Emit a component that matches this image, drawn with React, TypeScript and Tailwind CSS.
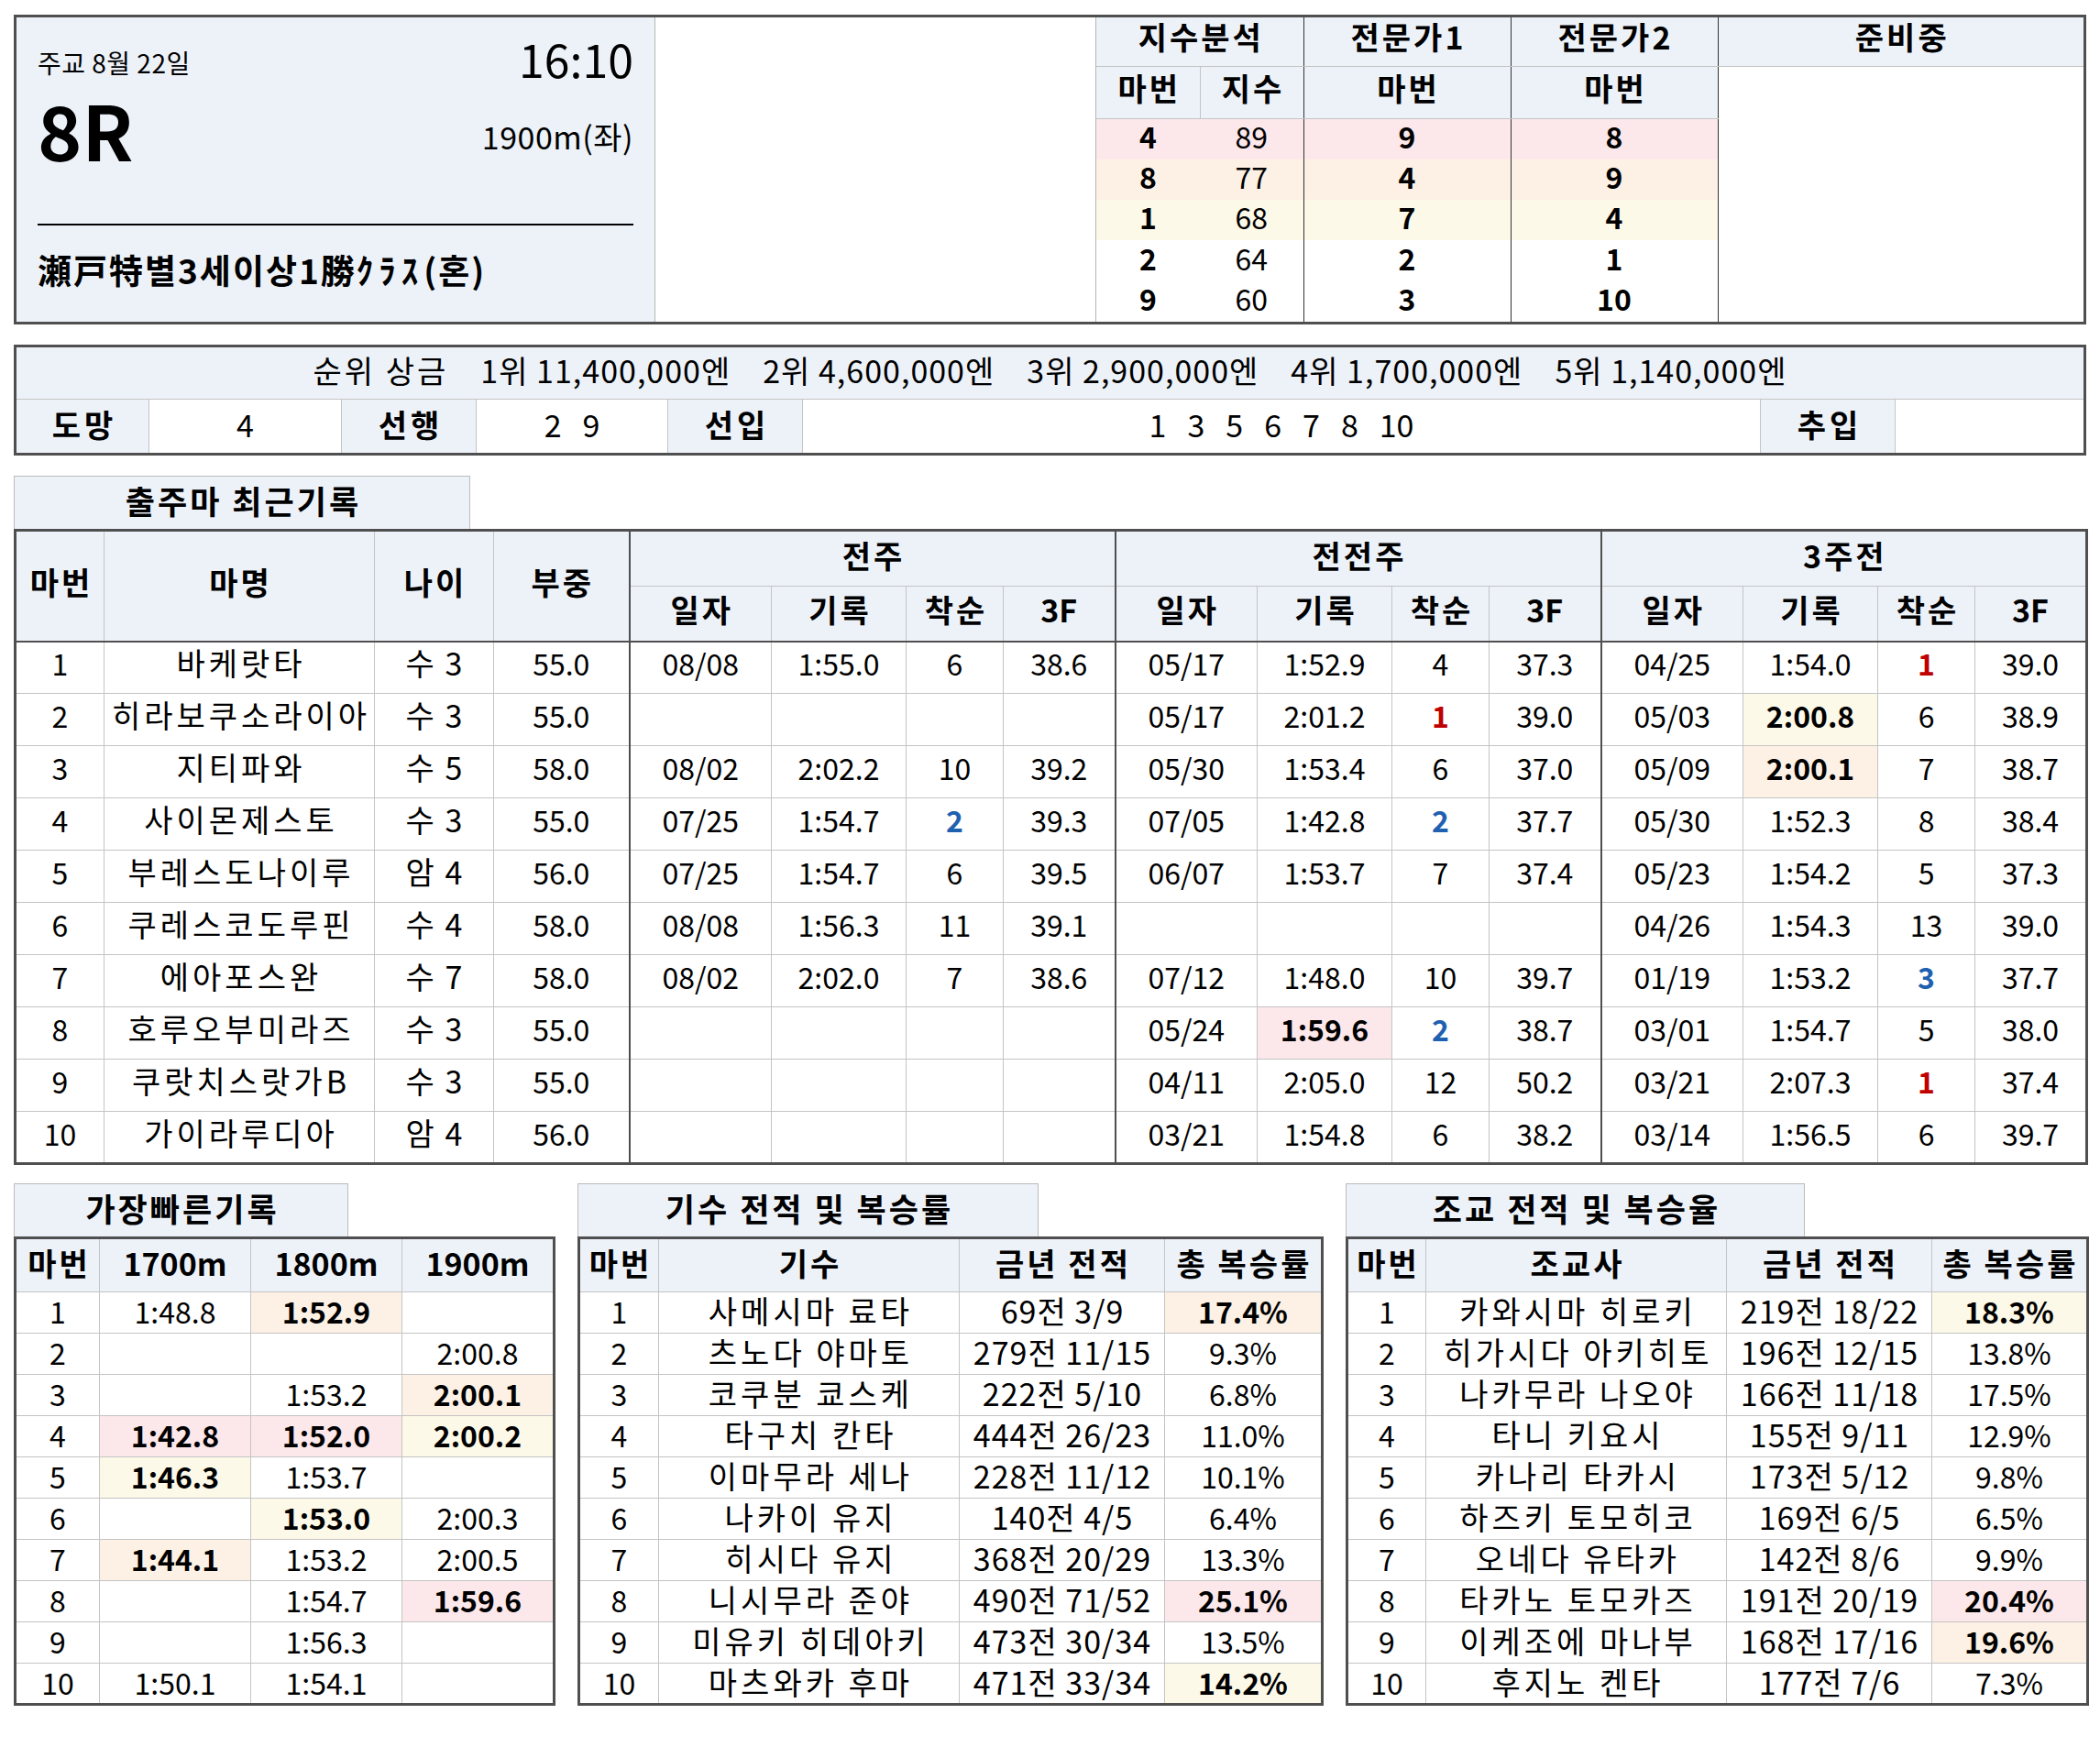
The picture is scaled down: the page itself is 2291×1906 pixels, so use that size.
import React from "react"

type Hl = "pink" | "orange" | "yellow"
type C = string | [string, Hl]

const FONT = "font-['Noto_Sans_CJK_KR','Noto_Sans',sans-serif]"
const HEAD = "bg-[#edf2f9]"
const BG: Record<Hl, string> = {
  pink: "bg-[#fce8ea]",
  orange: "bg-[#fdf1e5]",
  yellow: "bg-[#fdf9e8]",
}
const CELL = "border border-[#c4c4c4] text-center align-middle px-0 pt-0 whitespace-nowrap"
const SEP = "border-l-2 border-l-[#4f4f4f]"
const HBOT = "border-b-2 border-b-[#4f4f4f]"
// hangul headers get extra spacing to match the wide korean face of the original
const HTH = "text-[34px] font-bold tracking-[3px] pl-[3px]"
const NTH = "text-[34px] font-bold"
const hasHangul = (s: string) => /[\uac00-\ud7a3]/.test(s)

type Race = { d: string; t: string; r: string; f: string; hl?: Hl; rc?: "red" | "blue" } | null

const HORSES: { no: string; name: string; age: string; w: string; races: Race[] }[] = [
  {
    no: "1", name: "바케랏타", age: "수 3", w: "55.0",
    races: [
      { d: "08/08", t: "1:55.0", r: "6", f: "38.6" },
      { d: "05/17", t: "1:52.9", r: "4", f: "37.3" },
      { d: "04/25", t: "1:54.0", r: "1", f: "39.0", rc: "red" },
    ],
  },
  {
    no: "2", name: "히라보쿠소라이아", age: "수 3", w: "55.0",
    races: [
      null,
      { d: "05/17", t: "2:01.2", r: "1", f: "39.0", rc: "red" },
      { d: "05/03", t: "2:00.8", r: "6", f: "38.9", hl: "yellow" },
    ],
  },
  {
    no: "3", name: "지티파와", age: "수 5", w: "58.0",
    races: [
      { d: "08/02", t: "2:02.2", r: "10", f: "39.2" },
      { d: "05/30", t: "1:53.4", r: "6", f: "37.0" },
      { d: "05/09", t: "2:00.1", r: "7", f: "38.7", hl: "orange" },
    ],
  },
  {
    no: "4", name: "사이몬제스토", age: "수 3", w: "55.0",
    races: [
      { d: "07/25", t: "1:54.7", r: "2", f: "39.3", rc: "blue" },
      { d: "07/05", t: "1:42.8", r: "2", f: "37.7", rc: "blue" },
      { d: "05/30", t: "1:52.3", r: "8", f: "38.4" },
    ],
  },
  {
    no: "5", name: "부레스도나이루", age: "암 4", w: "56.0",
    races: [
      { d: "07/25", t: "1:54.7", r: "6", f: "39.5" },
      { d: "06/07", t: "1:53.7", r: "7", f: "37.4" },
      { d: "05/23", t: "1:54.2", r: "5", f: "37.3" },
    ],
  },
  {
    no: "6", name: "쿠레스코도루핀", age: "수 4", w: "58.0",
    races: [
      { d: "08/08", t: "1:56.3", r: "11", f: "39.1" },
      null,
      { d: "04/26", t: "1:54.3", r: "13", f: "39.0" },
    ],
  },
  {
    no: "7", name: "에아포스완", age: "수 7", w: "58.0",
    races: [
      { d: "08/02", t: "2:02.0", r: "7", f: "38.6" },
      { d: "07/12", t: "1:48.0", r: "10", f: "39.7" },
      { d: "01/19", t: "1:53.2", r: "3", f: "37.7", rc: "blue" },
    ],
  },
  {
    no: "8", name: "호루오부미라즈", age: "수 3", w: "55.0",
    races: [
      null,
      { d: "05/24", t: "1:59.6", r: "2", f: "38.7", hl: "pink", rc: "blue" },
      { d: "03/01", t: "1:54.7", r: "5", f: "38.0" },
    ],
  },
  {
    no: "9", name: "쿠랏치스랏가B", age: "수 3", w: "55.0",
    races: [
      null,
      { d: "04/11", t: "2:05.0", r: "12", f: "50.2" },
      { d: "03/21", t: "2:07.3", r: "1", f: "37.4", rc: "red" },
    ],
  },
  {
    no: "10", name: "가이라루디아", age: "암 4", w: "56.0",
    races: [
      null,
      { d: "03/21", t: "1:54.8", r: "6", f: "38.2" },
      { d: "03/14", t: "1:56.5", r: "6", f: "39.7" },
    ],
  },
]

const BEST: C[][] = [
  ["1", "1:48.8", ["1:52.9", "orange"], ""],
  ["2", "", "", "2:00.8"],
  ["3", "", "1:53.2", ["2:00.1", "orange"]],
  ["4", ["1:42.8", "pink"], ["1:52.0", "pink"], ["2:00.2", "yellow"]],
  ["5", ["1:46.3", "yellow"], "1:53.7", ""],
  ["6", "", ["1:53.0", "yellow"], "2:00.3"],
  ["7", ["1:44.1", "orange"], "1:53.2", "2:00.5"],
  ["8", "", "1:54.7", ["1:59.6", "pink"]],
  ["9", "", "1:56.3", ""],
  ["10", "1:50.1", "1:54.1", ""],
]

const JOCKEYS: C[][] = [
  ["1", "사메시마 료타", "69전 3/9", ["17.4%", "orange"]],
  ["2", "츠노다 야마토", "279전 11/15", "9.3%"],
  ["3", "코쿠분 쿄스케", "222전 5/10", "6.8%"],
  ["4", "타구치 칸타", "444전 26/23", "11.0%"],
  ["5", "이마무라 세나", "228전 11/12", "10.1%"],
  ["6", "나카이 유지", "140전 4/5", "6.4%"],
  ["7", "히시다 유지", "368전 20/29", "13.3%"],
  ["8", "니시무라 준야", "490전 71/52", ["25.1%", "pink"]],
  ["9", "미유키 히데아키", "473전 30/34", "13.5%"],
  ["10", "마츠와카 후마", "471전 33/34", ["14.2%", "yellow"]],
]

const TRAINERS: C[][] = [
  ["1", "카와시마 히로키", "219전 18/22", ["18.3%", "yellow"]],
  ["2", "히가시다 아키히토", "196전 12/15", "13.8%"],
  ["3", "나카무라 나오야", "166전 11/18", "17.5%"],
  ["4", "타니 키요시", "155전 9/11", "12.9%"],
  ["5", "카나리 타카시", "173전 5/12", "9.8%"],
  ["6", "하즈키 토모히코", "169전 6/5", "6.5%"],
  ["7", "오네다 유타카", "142전 8/6", "9.9%"],
  ["8", "타카노 토모카즈", "191전 20/19", ["20.4%", "pink"]],
  ["9", "이케조에 마나부", "168전 17/16", ["19.6%", "orange"]],
  ["10", "후지노 켄타", "177전 7/6", "7.3%"],
]

const INDEX_ROWS = [
  { a: "4", b: "89", c: "9", d: "8", bg: BG.pink },
  { a: "8", b: "77", c: "4", d: "9", bg: BG.orange },
  { a: "1", b: "68", c: "7", d: "4", bg: BG.yellow },
  { a: "2", b: "64", c: "2", d: "1", bg: "" },
  { a: "9", b: "60", c: "3", d: "10", bg: "" },
]

const PRIZES = ["1위 11,400,000엔", "2위 4,600,000엔", "3위 2,900,000엔", "4위 1,700,000엔", "5위 1,140,000엔"]

const NAME_TD = "text-[34px] tracking-[4px] pl-[4px]"
const REC_TD = "text-[34px] tracking-[1px] pl-[1px]"
const NUM_TD = "text-[32px]"

function Tab({ w, children }: { w: string; children: React.ReactNode }) {
  return (
    <div className={`${w} h-[58px] ${HEAD} border border-b-0 border-[#bcbcbc] flex items-center justify-center pb-[6px] text-[35px] font-bold tracking-[3px] pl-[3px] leading-none`}>
      {children}
    </div>
  )
}

function SideTable({ title, tabW, w, cols, head, rows, tds }: {
  title: string
  tabW: string
  w: string
  cols: string[]
  head: string[]
  rows: C[][]
  tds: string[]
}) {
  return (
    <div className={w}>
      <Tab w={tabW}>{title}</Tab>
      <table className="w-full table-fixed border-collapse border-[3px] border-[#4f4f4f] leading-none">
        <colgroup>
          {cols.map((c, i) => (
            <col key={i} className={c} />
          ))}
        </colgroup>
        <thead>
          <tr className="h-[59px]">
            {head.map((h, i) => (
              <th key={i} className={`${CELL} ${HEAD} pb-[6px] ${hasHangul(h) ? HTH : NTH}`}>{h}</th>
            ))}
          </tr>
        </thead>
        <tbody>
          {rows.map((r, ri) => (
            <tr key={ri} className="h-[45px]">
              {r.map((c, ci) => {
                const v = typeof c === "string" ? c : c[0]
                const hl = typeof c === "string" ? "" : `${BG[c[1]]} font-bold`
                return (
                  <td key={ci} className={`${CELL} pb-[4px] ${hl} ${tds[ci]}`}>{v}</td>
                )
              })}
            </tr>
          ))}
        </tbody>
      </table>
    </div>
  )
}

export default function App() {
  return (
    <div className={`${FONT} w-[2291px] min-h-[1906px] bg-white text-black pl-[15px] pt-[16px]`}>
      {/* race header */}
      <div className="flex w-[2261px] h-[338px] border-[3px] border-[#4f4f4f]">
        <div className={`w-[697px] ${HEAD} border-r border-[#b5b5b5] flex flex-col px-[23px] pt-[19px]`}>
          <div className="flex justify-between items-end">
            <div className="text-[28px] tracking-[0.5px] leading-none mb-[6px]">주교 8월 22일</div>
            <div className="text-[50px] leading-none">16:10</div>
          </div>
          <div className="flex justify-between items-end mt-[12px]">
            <div className="text-[82px] font-bold leading-none">8R</div>
            <div className="text-[34px] tracking-[0.5px] leading-none mb-[16px]">1900m(좌)</div>
          </div>
          <div className="h-[2px] bg-black mt-[62px]" />
          <div className="text-[37px] font-bold tracking-[2px] leading-none mt-[30px] whitespace-nowrap">
            瀬戸特별3세이상1勝<span className="tracking-[6px]">ｸﾗｽ</span>(혼)
          </div>
        </div>
        <div className="w-[481px] border-r border-[#b5b5b5]" />
        <table className="flex-1 h-full table-fixed border-collapse leading-none">
          <colgroup>
            <col className="w-[113px]" />
            <col className="w-[113px]" />
            <col className="w-[226px]" />
            <col className="w-[226px]" />
            <col />
          </colgroup>
          <tbody>
            <tr className="h-[53px]">
              <th colSpan={2} className={`${HEAD} border-b border-[#c4c4c4] pb-[10px] ${HTH}`}>지수분석</th>
              <th className={`${HEAD} border-b border-b-[#c4c4c4] border-l border-l-[#333333] pb-[10px] ${HTH}`}>전문가1</th>
              <th className={`${HEAD} border-b border-b-[#c4c4c4] border-l border-l-[#333333] pb-[10px] ${HTH}`}>전문가2</th>
              <th className={`${HEAD} border-b border-b-[#c4c4c4] border-l border-l-[#333333] pb-[10px] ${HTH}`}>준비중</th>
            </tr>
            <tr className="h-[57px]">
              <th className={`${HEAD} border-b border-[#c4c4c4] pb-[10px] ${HTH}`}>마번</th>
              <th className={`${HEAD} border-b border-l border-[#c4c4c4] pb-[10px] ${HTH}`}>지수</th>
              <th className={`${HEAD} border-b border-b-[#c4c4c4] border-l border-l-[#333333] pb-[10px] ${HTH}`}>마번</th>
              <th className={`${HEAD} border-b border-b-[#c4c4c4] border-l border-l-[#333333] pb-[10px] ${HTH}`}>마번</th>
              <td rowSpan={6} className="border-l border-l-[#333333] bg-white" />
            </tr>
            {INDEX_ROWS.map((r, i) => (
              <tr key={i} className="h-[44px] text-[32px]">
                <td className={`${r.bg} text-center pb-[8px] font-bold`}>{r.a}</td>
                <td className={`${r.bg} text-center pb-[8px]`}>{r.b}</td>
                <td className={`${r.bg} text-center pb-[8px] font-bold border-l border-l-[#333333]`}>{r.c}</td>
                <td className={`${r.bg} text-center pb-[8px] font-bold border-l border-l-[#333333]`}>{r.d}</td>
              </tr>
            ))}
          </tbody>
        </table>
      </div>

      {/* prize & running style */}
      <div className="mt-[22px] w-[2261px] border-[3px] border-[#4f4f4f] text-[34px] leading-none">
        <div className={`h-[57px] ${HEAD} border-b border-[#c4c4c4] flex items-center justify-center gap-[35px] pb-[6px]`}>
          <span className="tracking-[3px]">순위 상금</span>
          {PRIZES.map((p) => (
            <span key={p} className="tracking-[1px]">{p}</span>
          ))}
        </div>
        <div className="h-[58px] flex">
          <div className={`w-[145px] ${HEAD} border-r border-[#c4c4c4] flex items-center justify-center pb-[4px] font-bold tracking-[4px] pl-[4px]`}>도망</div>
          <div className="w-[209px] flex items-center justify-center pb-[4px]">4</div>
          <div className={`w-[148px] ${HEAD} border-x border-[#c4c4c4] flex items-center justify-center pb-[4px] font-bold tracking-[4px] pl-[4px]`}>선행</div>
          <div className="w-[208px] flex items-center justify-center gap-[23px] pb-[4px]">
            <span>2</span>
            <span>9</span>
          </div>
          <div className={`w-[148px] ${HEAD} border-x border-[#c4c4c4] flex items-center justify-center pb-[4px] font-bold tracking-[4px] pl-[4px]`}>선입</div>
          <div className="w-[1044px] flex items-center justify-center gap-[23px] pb-[4px]">
            {["1", "3", "5", "6", "7", "8", "10"].map((n) => (
              <span key={n}>{n}</span>
            ))}
          </div>
          <div className={`w-[148px] ${HEAD} border-x border-[#c4c4c4] flex items-center justify-center pb-[4px] font-bold tracking-[4px] pl-[4px]`}>추입</div>
          <div className="flex-1" />
        </div>
      </div>

      {/* recent records */}
      <div className="mt-[22px]">
        <Tab w="w-[498px]">출주마 최근기록</Tab>
        <table className="w-[2261px] table-fixed border-collapse border-[3px] border-[#4f4f4f] leading-none">
          <colgroup>
            <col className="w-[97px]" />
            <col className="w-[295px]" />
            <col className="w-[130px]" />
            <col className="w-[148px]" />
            {[0, 1, 2].map((g) => (
              <React.Fragment key={g}>
                <col className="w-[155px]" />
                <col className="w-[147px]" />
                <col className="w-[106px]" />
                <col className="w-[122px]" />
              </React.Fragment>
            ))}
          </colgroup>
          <thead>
            <tr className="h-[61px]">
              <th rowSpan={2} className={`${CELL} ${HEAD} ${HBOT} pb-[8px] ${HTH}`}>마번</th>
              <th rowSpan={2} className={`${CELL} ${HEAD} ${HBOT} pb-[8px] ${HTH}`}>마명</th>
              <th rowSpan={2} className={`${CELL} ${HEAD} ${HBOT} pb-[8px] ${HTH}`}>나이</th>
              <th rowSpan={2} className={`${CELL} ${HEAD} ${HBOT} pb-[8px] ${HTH}`}>부중</th>
              {["전주", "전전주", "3주전"].map((g) => (
                <th key={g} colSpan={4} className={`${CELL} ${HEAD} ${SEP} pb-[8px] ${HTH}`}>{g}</th>
              ))}
            </tr>
            <tr className="h-[60px]">
              {[0, 1, 2].map((g) => (
                <React.Fragment key={g}>
                  <th className={`${CELL} ${HEAD} ${HBOT} ${SEP} pb-[8px] ${HTH}`}>일자</th>
                  <th className={`${CELL} ${HEAD} ${HBOT} pb-[8px] ${HTH}`}>기록</th>
                  <th className={`${CELL} ${HEAD} ${HBOT} pb-[8px] ${HTH}`}>착순</th>
                  <th className={`${CELL} ${HEAD} ${HBOT} pb-[8px] ${NTH}`}>3F</th>
                </React.Fragment>
              ))}
            </tr>
          </thead>
          <tbody>
            {HORSES.map((h) => (
              <tr key={h.no} className="h-[57px] text-[32px]">
                <td className={`${CELL} pb-[10px]`}>{h.no}</td>
                <td className={`${CELL} pb-[10px] ${NAME_TD}`}>{h.name}</td>
                <td className={`${CELL} pb-[10px] text-[34px] tracking-[2px] pl-[2px]`}>{h.age}</td>
                <td className={`${CELL} pb-[10px]`}>{h.w}</td>
                {h.races.map((r, gi) => (
                  <React.Fragment key={gi}>
                    <td className={`${CELL} pb-[10px] ${SEP}`}>{r ? r.d : ""}</td>
                    <td className={`${CELL} pb-[10px] ${r && r.hl ? `${BG[r.hl]} font-bold` : ""}`}>{r ? r.t : ""}</td>
                    <td
                      className={`${CELL} pb-[10px] ${
                        r && r.rc === "red"
                          ? "text-[#c00000] font-bold"
                          : r && r.rc === "blue"
                          ? "text-[#2060b0] font-bold"
                          : ""
                      }`}
                    >
                      {r ? r.r : ""}
                    </td>
                    <td className={`${CELL} pb-[10px]`}>{r ? r.f : ""}</td>
                  </React.Fragment>
                ))}
              </tr>
            ))}
          </tbody>
        </table>
      </div>

      {/* bottom tables */}
      <div className="mt-[20px] flex gap-[27px] w-[2261px]">
        <SideTable
          title="가장빠른기록"
          tabW="w-[365px]"
          w="w-[588px]"
          cols={["w-[92px]", "w-[165px]", "w-[165px]", "w-[166px]"]}
          head={["마번", "1700m", "1800m", "1900m"]}
          rows={BEST}
          tds={[NUM_TD, NUM_TD, NUM_TD, NUM_TD]}
        />
        <SideTable
          title="기수 전적 및 복승률"
          tabW="w-[503px]"
          w="w-[811px]"
          cols={["w-[87px]", "w-[328px]", "w-[224px]", "w-[172px]"]}
          head={["마번", "기수", "금년 전적", "총 복승률"]}
          rows={JOCKEYS}
          tds={[NUM_TD, NAME_TD, REC_TD, NUM_TD]}
        />
        <SideTable
          title="조교 전적 및 복승율"
          tabW="w-[501px]"
          w="w-[808px]"
          cols={["w-[86px]", "w-[328px]", "w-[224px]", "w-[170px]"]}
          head={["마번", "조교사", "금년 전적", "총 복승률"]}
          rows={TRAINERS}
          tds={[NUM_TD, NAME_TD, REC_TD, NUM_TD]}
        />
      </div>
    </div>
  )
}
